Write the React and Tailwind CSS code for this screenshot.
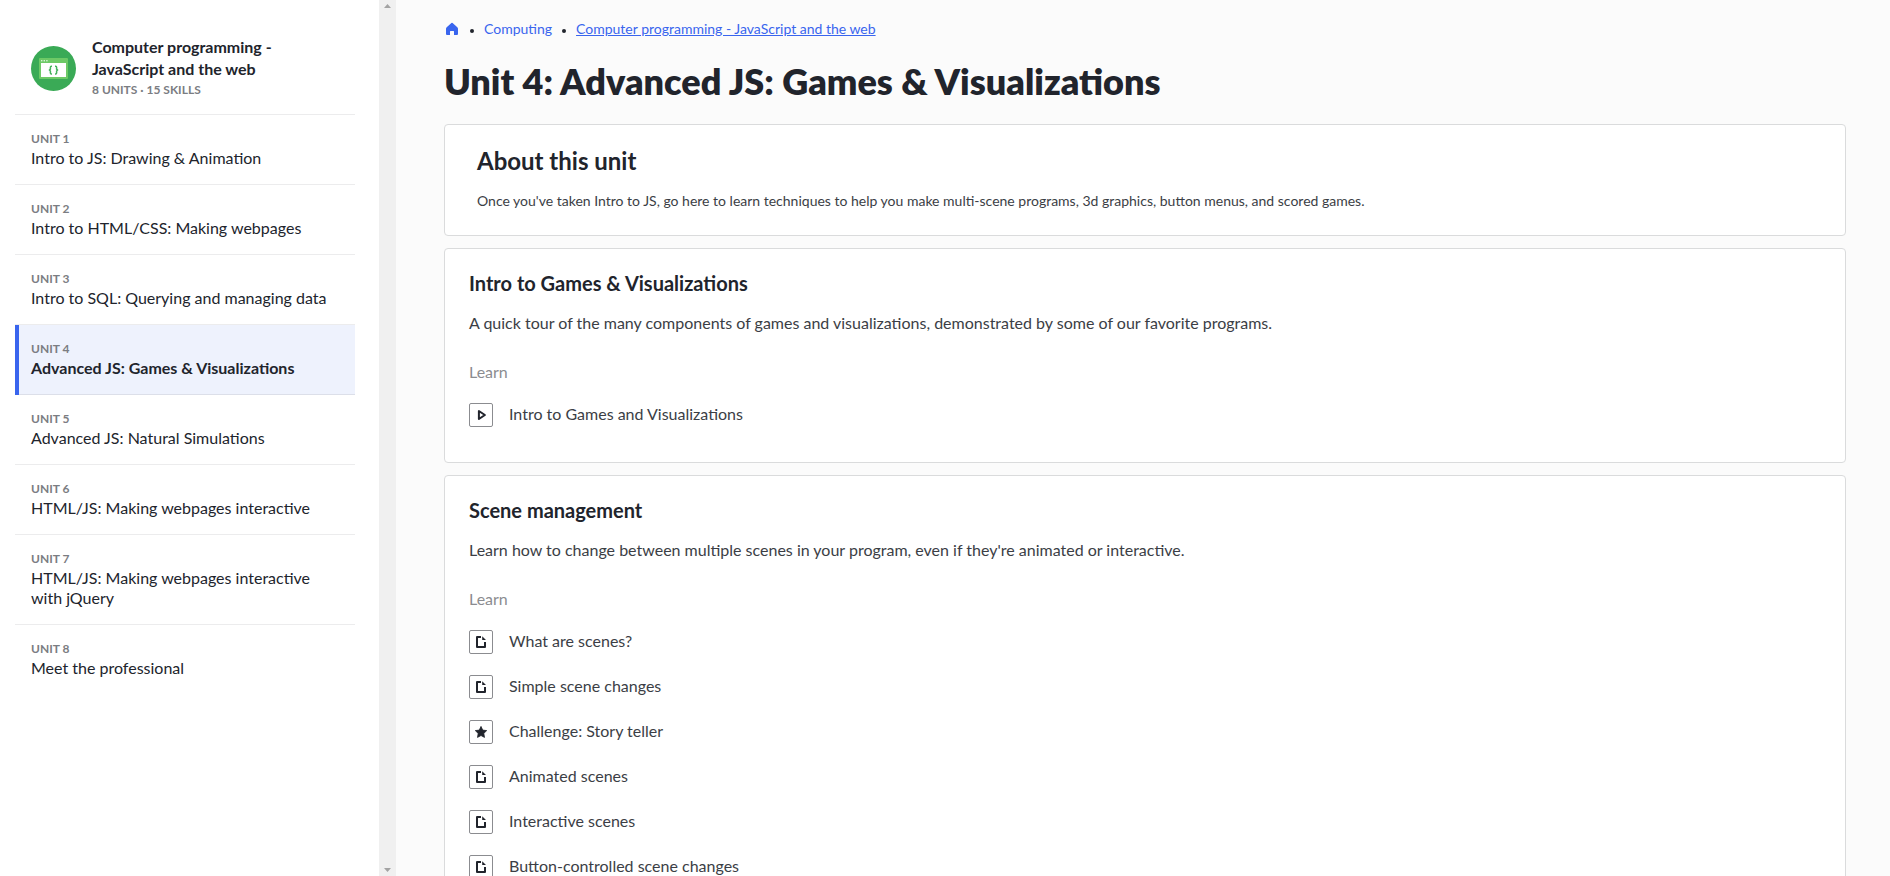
import React from "react";

const units = [
  "Intro to JS: Drawing & Animation",
  "Intro to HTML/CSS: Making webpages",
  "Intro to SQL: Querying and managing data",
  "Advanced JS: Games & Visualizations",
  "Advanced JS: Natural Simulations",
  "HTML/JS: Making webpages interactive",
  "HTML/JS: Making webpages interactive with jQuery",
  "Meet the professional",
];

const activeUnit = 3;

const lessons = [
  {
    title: "Intro to Games & Visualizations",
    description:
      "A quick tour of the many components of games and visualizations, demonstrated by some of our favorite programs.",
    items: [{ kind: "video", label: "Intro to Games and Visualizations" }],
  },
  {
    title: "Scene management",
    description:
      "Learn how to change between multiple scenes in your program, even if they're animated or interactive.",
    items: [
      { kind: "article", label: "What are scenes?" },
      { kind: "article", label: "Simple scene changes" },
      { kind: "challenge", label: "Challenge: Story teller" },
      { kind: "article", label: "Animated scenes" },
      { kind: "article", label: "Interactive scenes" },
      { kind: "article", label: "Button-controlled scene changes" },
    ],
  },
];

function CourseIcon() {
  return (
    <svg className="size-[45px] shrink-0" viewBox="0 0 45 45" aria-hidden="true">
      <circle cx="22.5" cy="22.5" r="22.5" fill="#3aaa56" />
      <rect x="8" y="12" width="29" height="21" rx="1" fill="#6dc966" />
      <rect x="10" y="17" width="25" height="14" fill="#fff" />
      <g fill="#d7f2d5">
        <rect x="10" y="14" width="1.4" height="1.4" />
        <rect x="12.6" y="14" width="1.4" height="1.4" />
        <rect x="15.2" y="14" width="1.4" height="1.4" />
      </g>
      <path
        d="M21 20.3h-.6q-1 0-1 1v1.8l-.9 1 .9 1v1.8q0 1 1 1h.6M24 20.3h.6q1 0 1 1v1.8l.9 1-.9 1v1.8q0 1-1 1H24"
        fill="none"
        stroke="#44b25b"
        strokeWidth="1.5"
      />
    </svg>
  );
}

function KindIcon({ kind }) {
  return (
    <span className="flex size-6 shrink-0 items-center justify-center rounded-xs border border-[#8b8c90]">
      <svg className="size-4" viewBox="0 0 16 16" fill="#21242c" aria-hidden="true">
        {kind === "video" && (
          <path
            d="M5.9 4v8l6-4z"
            fill="none"
            stroke="#21242c"
            strokeWidth="2"
            strokeLinejoin="round"
          />
        )}
        {kind === "article" && (
          <path d="M3 3q0-1 1-1h4v2H5v8h6V8h2v5q0 1-1 1H4q-1 0-1-1zM9.2 2.2 13 6H9.2z" />
        )}
        {kind === "challenge" && (
          <path
            d="M8 2.4l1.7 3.7 4 .5-2.9 2.8.7 4L8 11.5l-3.5 1.9.7-4L2.3 6.6l4-.5z"
            stroke="#21242c"
            strokeWidth="0.8"
            strokeLinejoin="round"
          />
        )}
      </svg>
    </span>
  );
}

function Sidebar() {
  return (
    <aside className="flex w-[396px] shrink-0 bg-white">
      <div className="min-w-0 flex-1 pr-6 pl-[15px]">
        <header className="flex items-center gap-4 border-b border-[#ececed] pt-9 pb-[14px] pl-4">
          <CourseIcon />
          <div>
            <h2 className="w-[200px] text-base leading-[22px] font-bold text-[#21242c]">
              Computer programming - JavaScript and the web
            </h2>
            <p className="text-xs leading-5 font-bold text-[#7b7d82]">8 UNITS · 15 SKILLS</p>
          </div>
        </header>
        <nav aria-label="Units">
          {units.map((title, i) => {
            const active = i === activeUnit;
            const last = i === units.length - 1;
            return (
              <a
                key={title}
                href={`#unit-${i + 1}`}
                aria-current={active ? "page" : undefined}
                className={`flex text-[#21242c] ${active ? "bg-[#eef2fd]" : ""} ${
                  last || active ? "" : "border-b border-[#ececed]"
                }`}
              >
                <span className={`w-1 shrink-0 ${active ? "bg-[#3965ee]" : ""}`} />
                <span
                  className={`block flex-1 pt-[15px] pr-4 pb-4 pl-3 ${
                    active ? "border-b border-[#dcdfe9]" : ""
                  }`}
                >
                  <span className="block text-xs leading-[18px] font-bold text-[#7b7d82]">
                    UNIT {i + 1}
                  </span>
                  <span className={`block text-base leading-5 ${active ? "font-bold" : ""}`}>
                    {title}
                  </span>
                </span>
              </a>
            );
          })}
        </nav>
      </div>
      <div className="flex w-[17px] flex-col items-center justify-between bg-[#f0f0f0] py-1">
        <svg className="h-1 w-[7px]" viewBox="0 0 7 4" fill="#a3a3a3" aria-hidden="true">
          <path d="M0 4 3.5 0 7 4z" />
        </svg>
        <svg className="h-1 w-[7px]" viewBox="0 0 7 4" fill="#a3a3a3" aria-hidden="true">
          <path d="M0 0h7L3.5 4z" />
        </svg>
      </div>
    </aside>
  );
}

function Separator() {
  return (
    <span aria-hidden="true" className="flex w-6 items-center justify-center pt-[3px]">
      <span className="size-1 rounded-full bg-[#21242c]" />
    </span>
  );
}

function Breadcrumbs() {
  return (
    <nav aria-label="Breadcrumb" className="flex items-center text-sm leading-5 text-[#3965ee]">
      <a href="#home" aria-label="Home">
        <svg className="size-4" viewBox="0 0 16 16" fill="#3965ee" aria-hidden="true">
          <path d="M7.4 1.9q.6-.5 1.2 0L13.3 6.300q.7.600.7 1.500V13q0 1-1 1h-3v-3.500q0-.5-.5-.5h-3q-.5 0-.5.500V14H3q-1 0-1-1V7.800q0-.9.7-1.500z" />
        </svg>
      </a>
      <Separator />
      <a href="#computing">Computing</a>
      <Separator />
      <a href="#course" className="underline">
        Computer programming - JavaScript and the web
      </a>
    </nav>
  );
}

function LessonCard({ lesson }) {
  return (
    <section className="rounded-sm border border-[#dadbdc] bg-white px-6 pt-[22px] pb-[35px]">
      <h2 className="text-xl leading-6 font-bold text-[#21242c]">{lesson.title}</h2>
      <p className="mt-4 text-base leading-6 text-[#3b3e45]">{lesson.description}</p>
      <h3 className="mt-[25px] text-base leading-6 text-[#8b8c90]">Learn</h3>
      <ul className="mt-[19px] flex flex-col gap-[21px]">
        {lesson.items.map((item) => (
          <li key={item.label}>
            <a
              href="#lesson"
              className="flex items-start gap-4 text-base leading-[22px] text-[#3b3e45]"
            >
              <KindIcon kind={item.kind} />
              {item.label}
            </a>
          </li>
        ))}
      </ul>
    </section>
  );
}

export default function App() {
  return (
    <div className="flex h-screen overflow-hidden bg-[#fbfbfb] font-['Lato',sans-serif]">
      <Sidebar />
      <main className="min-w-0 flex-1 overflow-hidden pt-[19px] pr-11 pl-12">
        <Breadcrumbs />
        <h1 className="mt-5 text-4xl leading-[44px] font-extrabold text-[#21242c]">
          Unit 4: Advanced JS: Games &amp; Visualizations
        </h1>
        <div className="mt-[21px] flex flex-col gap-3">
          <section className="rounded-sm border border-[#dadbdc] bg-white px-8 pt-[22px] pb-6">
            <h2 className="text-2xl leading-7 font-bold text-[#21242c]">About this unit</h2>
            <p className="mt-4 text-sm leading-5 text-[#3b3e45]">
              Once you've taken Intro to JS, go here to learn techniques to help you make
              multi-scene programs, 3d graphics, button menus, and scored games.
            </p>
          </section>
          {lessons.map((lesson) => (
            <LessonCard key={lesson.title} lesson={lesson} />
          ))}
        </div>
      </main>
    </div>
  );
}
